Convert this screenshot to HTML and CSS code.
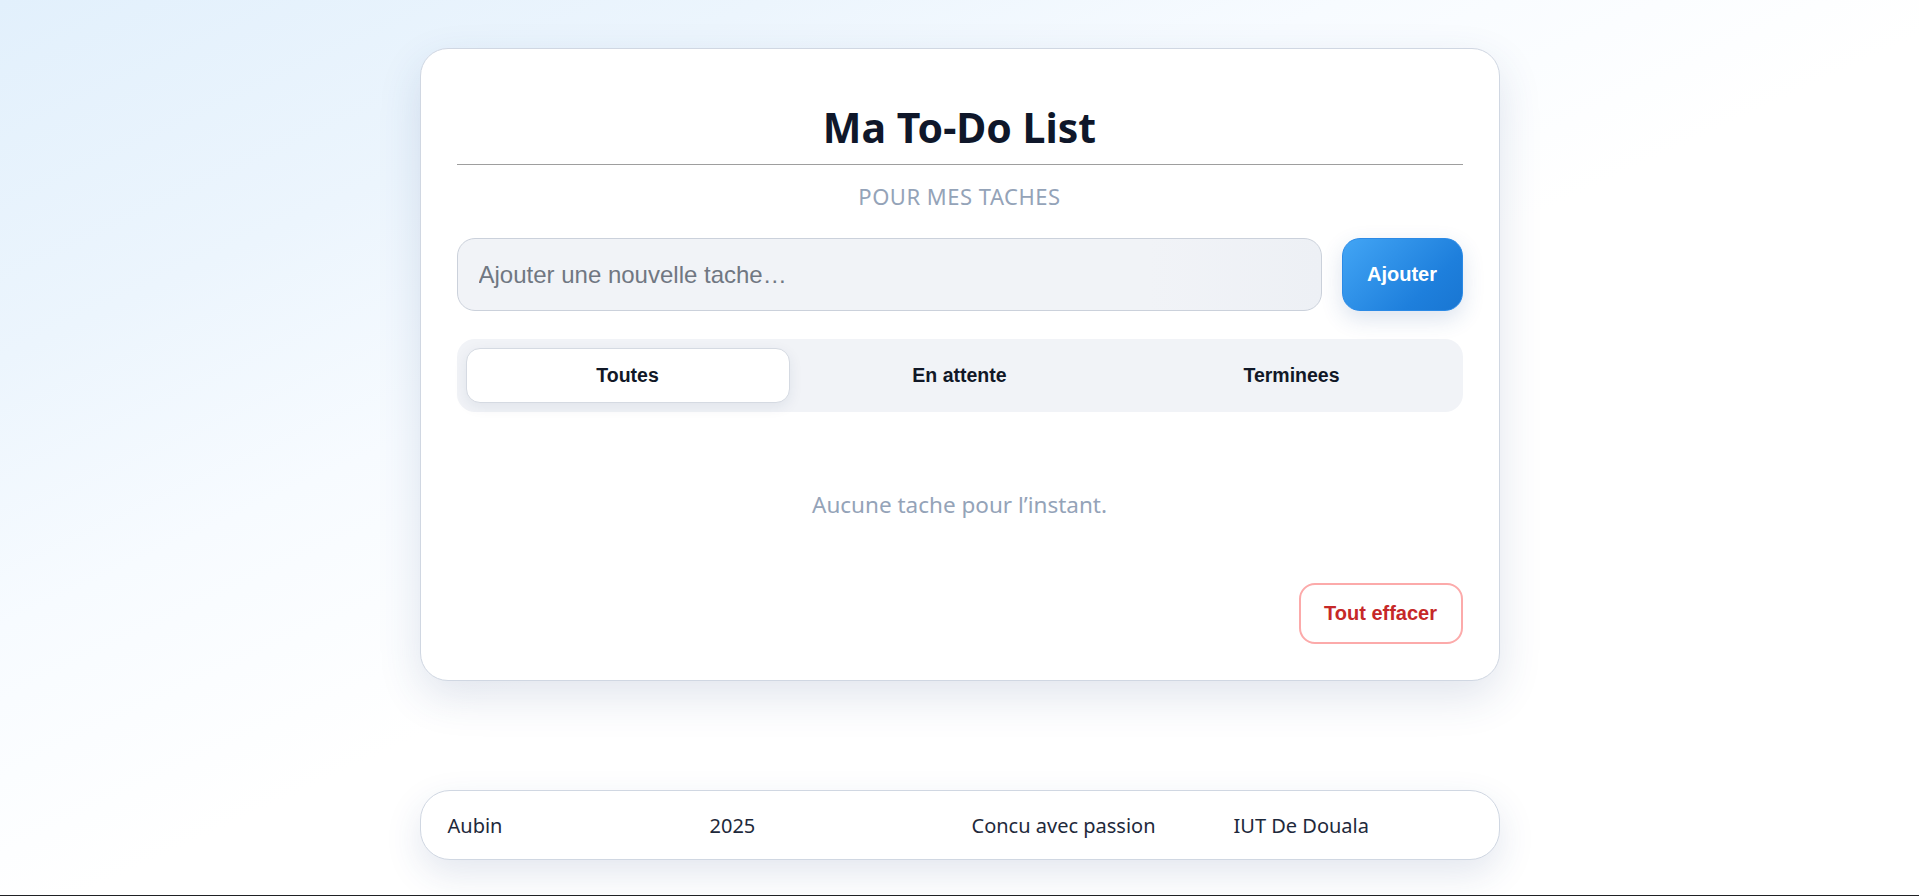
FILE: index.html
```html
<!DOCTYPE html>
<html lang="fr">
<head>
<meta charset="utf-8">
<title>Ma To-Do List</title>
<link rel="stylesheet" href="styles.css">
</head>
<body>
  <main class="card">
    <h1 class="title">Ma To-Do List</h1>
    <hr class="divider">
    <p class="subtitle">POUR MES TACHES</p>
    <form class="add-row">
      <input class="task-input" type="text" placeholder="Ajouter une nouvelle tache…">
      <button class="add-btn" type="button">Ajouter</button>
    </form>
    <nav class="tabs">
      <button class="tab active" type="button">Toutes</button>
      <button class="tab" type="button">En attente</button>
      <button class="tab" type="button">Terminees</button>
    </nav>
    <p class="empty">Aucune tache pour l’instant.</p>
    <div class="actions">
      <button class="clear-btn" type="button">Tout effacer</button>
    </div>
  </main>
  <footer class="footer">
    <span>Aubin</span>
    <span>2025</span>
    <span>Concu avec passion</span>
    <span>IUT De Douala</span>
  </footer>
  <div class="page-end"></div>
</body>
</html>
```

FILE: styles.css
```css
* { box-sizing: border-box; }

html, body { margin: 0; padding: 0; }

body {
  min-height: 100vh;
  background: linear-gradient(to bottom right, #e2f0fc 0%, #ecf5fd 20%, #f7fbff 35%, #ffffff 52%, #ffffff 100%);
  font-family: "Noto Sans", "Open Sans", sans-serif;
  color: #0f172a;
  display: flex;
  flex-direction: column;
  align-items: center;
  overflow: hidden;
}

.card {
  width: 1080px;
  margin-top: 48px;
  background: #ffffff;
  border: 1px solid #d0d7e2;
  border-radius: 28px;
  padding: 0 36px 36px;
  box-shadow: 0 16px 44px rgba(40, 70, 130, 0.14);
}

.title {
  margin: 54px 0 0;
  font-size: 41px;
  line-height: 48px;
  font-weight: 700;
  text-align: center;
  color: #0f172a;
}

.divider {
  margin: 13px 0 0;
  border: 0;
  height: 1px;
  background: #9e9e9e;
}

.subtitle {
  margin: 17px 0 0;
  font-size: 22px;
  line-height: 28px;
  text-align: center;
  color: #94a3b8;
  letter-spacing: 0.5px;
}

.add-row {
  margin: 28px 0 0;
  display: flex;
  gap: 20px;
  height: 73px;
}

.task-input {
  flex: 1;
  height: 100%;
  border: 1.5px solid #cbd1db;
  border-radius: 18px;
  background: linear-gradient(90deg, #f1f3f7 0%, #f1f3f7 80%, #edf0f5 100%);
  padding: 0 21px;
  font-family: "Liberation Sans", Arial, sans-serif;
  font-size: 24px;
  color: #111827;
  outline: none;
}

.task-input::placeholder { color: #707782; }

.add-btn {
  width: 121px;
  height: 100%;
  border: 1px solid #2b8ae6;
  border-radius: 18px;
  background: linear-gradient(135deg, #42a5f5 0%, #1e7fdc 70%, #1976d2 100%);
  color: #ffffff;
  font-family: "Liberation Sans", Arial, sans-serif;
  font-size: 20px;
  font-weight: 700;
  box-shadow: 0 8px 22px rgba(40, 80, 150, 0.16);
  cursor: pointer;
}

.tabs {
  margin-top: 28px;
  height: 73px;
  padding: 9px;
  display: grid;
  grid-template-columns: repeat(3, 1fr);
  gap: 8px;
  background: #f1f3f7;
  border-radius: 18px;
}

.tab {
  height: 100%;
  border: 1px solid transparent;
  border-radius: 14px;
  background: transparent;
  font-family: "Liberation Sans", Arial, sans-serif;
  font-size: 19.5px;
  font-weight: 700;
  color: #111827;
  cursor: pointer;
}

.tab.active {
  background: #ffffff;
  border-color: #d5dae2;
  box-shadow: 0 4px 14px rgba(30, 50, 90, 0.08);
}

.empty {
  margin: 0;
  padding: 78px 0 63px;
  font-size: 22.5px;
  line-height: 30px;
  text-align: center;
  color: #94a3b8;
}

.actions {
  display: flex;
  justify-content: flex-end;
}

.clear-btn {
  width: 164px;
  height: 61px;
  border: 2px solid #fcaaaa;
  border-radius: 16px;
  background: #ffffff;
  color: #c62828;
  font-family: "Liberation Sans", Arial, sans-serif;
  font-size: 20px;
  font-weight: 700;
  cursor: pointer;
}

.footer {
  width: 1080px;
  height: 70px;
  margin-top: 109px;
  padding: 0 27px;
  display: grid;
  grid-template-columns: repeat(4, 1fr);
  gap: 24px;
  align-items: center;
  background: #ffffff;
  border: 1px solid #d0d7e2;
  border-radius: 30px;
  box-shadow: 0 14px 36px rgba(40, 70, 130, 0.13);
  font-size: 20px;
  color: #1e293b;
}

.page-end {
  width: 100%;
  height: 2px;
  margin-top: 35px;
  background: #1f2124;
  flex-shrink: 0;
}
```
